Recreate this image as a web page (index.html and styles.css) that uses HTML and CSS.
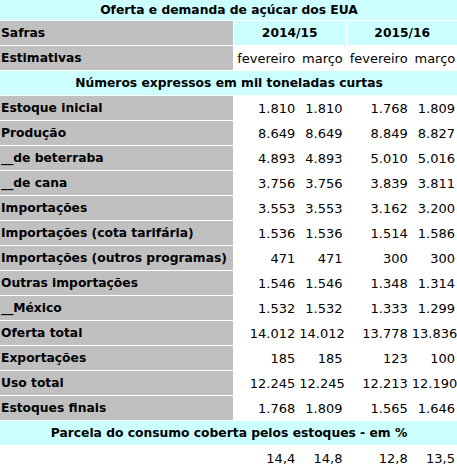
FILE: index.html
```html
<!DOCTYPE html>
<html lang="pt">
<head>
    <meta charset="UTF-8">
    <meta name="viewport" content="width=device-width, initial-scale=1.0">
    <title>Oferta e demanda de açúcar dos EUA</title>
    <link rel="stylesheet" href="styles.css">
</head>
<body>
    <table class="sugar-table">
        <colgroup>
            <col class="col-label">
            <col class="col-wide">
            <col class="col-narrow">
            <col class="col-wide">
            <col class="col-narrow">
        </colgroup>

        <!-- Header -->
        <tr class="title-row">
            <td class="band" colspan="5">Oferta e demanda de açúcar dos EUA</td>
        </tr>
        <tr>
            <td class="label">Safras</td>
            <td class="band" colspan="2">2014/15</td>
            <td class="band" colspan="2">2015/16</td>
        </tr>
        <tr>
            <td class="label">Estimativas</td>
            <td class="month">fevereiro</td>
            <td class="month">março</td>
            <td class="month">fevereiro</td>
            <td class="month">março</td>
        </tr>
        <tr>
            <td class="band" colspan="5">Números expressos em mil toneladas curtas</td>
        </tr>

        <!-- Data -->
        <tr><td class="label">Estoque inicial</td><td class="num">1.810</td><td class="num">1.810</td><td class="num">1.768</td><td class="num">1.809</td></tr>
        <tr><td class="label">Produção</td><td class="num">8.649</td><td class="num">8.649</td><td class="num">8.849</td><td class="num">8.827</td></tr>
        <tr><td class="label">__de beterraba</td><td class="num">4.893</td><td class="num">4.893</td><td class="num">5.010</td><td class="num">5.016</td></tr>
        <tr><td class="label">__de cana</td><td class="num">3.756</td><td class="num">3.756</td><td class="num">3.839</td><td class="num">3.811</td></tr>
        <tr><td class="label">Importações</td><td class="num">3.553</td><td class="num">3.553</td><td class="num">3.162</td><td class="num">3.200</td></tr>
        <tr><td class="label">Importações (cota tarifária)</td><td class="num">1.536</td><td class="num">1.536</td><td class="num">1.514</td><td class="num">1.586</td></tr>
        <tr><td class="label">Importações (outros programas)</td><td class="num">471</td><td class="num">471</td><td class="num">300</td><td class="num">300</td></tr>
        <tr><td class="label">Outras importações</td><td class="num">1.546</td><td class="num">1.546</td><td class="num">1.348</td><td class="num">1.314</td></tr>
        <tr><td class="label">__México</td><td class="num">1.532</td><td class="num">1.532</td><td class="num">1.333</td><td class="num">1.299</td></tr>
        <tr><td class="label">Oferta total</td><td class="num">14.012</td><td class="num">14.012</td><td class="num">13.778</td><td class="num">13.836</td></tr>
        <tr><td class="label">Exportações</td><td class="num">185</td><td class="num">185</td><td class="num">123</td><td class="num">100</td></tr>
        <tr><td class="label">Uso total</td><td class="num">12.245</td><td class="num">12.245</td><td class="num">12.213</td><td class="num">12.190</td></tr>
        <tr><td class="label">Estoques finais</td><td class="num">1.768</td><td class="num">1.809</td><td class="num">1.565</td><td class="num">1.646</td></tr>

        <!-- Footer -->
        <tr>
            <td class="band" colspan="5">Parcela do consumo coberta pelos estoques - em %</td>
        </tr>
        <tr>
            <td></td>
            <td class="num">14,4</td>
            <td class="num">14,8</td>
            <td class="num">12,8</td>
            <td class="num">13,5</td>
        </tr>
    </table>
</body>
</html>
```

FILE: styles.css
```css
html, body {
    margin: 0;
    padding: 0;
    overflow: hidden;
    background-color: #ffffff;
}

/* Main Table */
.sugar-table {
    table-layout: fixed;
    width: 460px;
    margin: -1px 0 0 -1px;
    border-collapse: separate;
    border-spacing: 1px;
    font-family: "DejaVu Sans", Verdana, sans-serif;
    font-size: 13px;
    color: #000000;
}

.col-label { width: 232px; }
.col-wide { width: 64px; }
.col-narrow { width: 46px; }

.sugar-table td {
    height: 24px;
    padding: 0;
    white-space: nowrap;
    overflow: hidden;
}

.title-row td {
    height: 20px;
}

/* Cell Types */
.band {
    background-color: #ccffff;
    font-weight: bold;
    font-size: 12.3px;
    text-align: center;
}

.label {
    background-color: #c0c0c0;
    font-weight: bold;
    font-size: 12.3px;
    padding-left: 1px !important;
}

.month {
    text-align: center;
}

.num {
    text-align: right;
    padding-right: 3px !important;
}
```
